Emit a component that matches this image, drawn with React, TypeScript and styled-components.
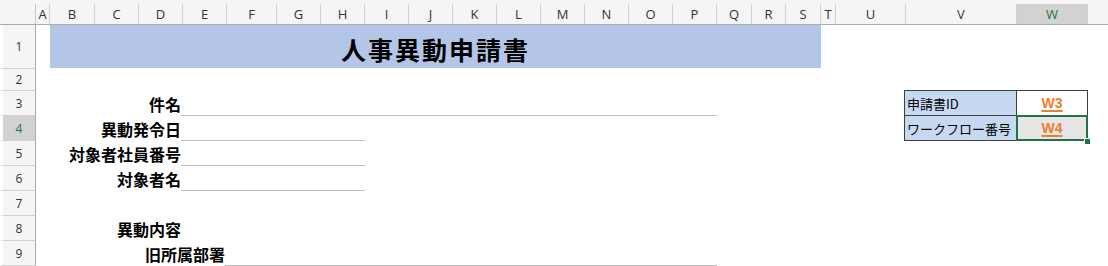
import React from "react";
import styled, { createGlobalStyle } from "styled-components";

const COLS = "ABCDEFGHIJKLMNOPQRSTUVW".split("");
const WIDTHS = [14, 45, 44, 44, 44, 50, 44, 44, 44, 44, 44, 44, 44, 44, 44, 44, 35, 34, 35, 15, 70, 111, 71];
const ROWS = [1, 2, 3, 4, 5, 6, 7, 8, 9];

// grid line helpers: column letter -> grid column, sheet row -> grid row
const col = (c: string) => COLS.indexOf(c) + 2;
const row = (r: number) => r + 1;

const GlobalStyle = createGlobalStyle`
  body {
    margin: 0;
    background: #fff;
    font-family: "Noto Sans CJK JP", "Noto Sans", sans-serif;
  }
`;

const Sheet = styled.div`
  display: grid;
  grid-template-columns: 36px ${WIDTHS.map((w) => `${w}px`).join(" ")} 1fr;
  grid-template-rows: 25px 44px 22px repeat(7, 25px) 1fr;
  width: 1108px;
  height: 266px;
  overflow: hidden;
`;

const HeaderBand = styled.div`
  grid-column: 1 / -1;
  grid-row: 1;
  background: #f5f5f5;
  border-bottom: 1px solid #ababab;
`;

const Corner = styled.div`
  grid-column: 1;
  grid-row: 1;
  margin-top: 4px;
  height: 20px;
  border-right: 1px solid #c6c6c6;
`;

const ColHead = styled.div<{ $col: number; $active?: boolean }>`
  grid-column: ${(p) => p.$col};
  grid-row: 1;
  margin-top: 4px;
  height: 20px;
  box-sizing: border-box;
  border-right: 1px solid #d0d0d0;
  background: ${(p) => (p.$active ? "#d2d2d2" : "transparent")};
  color: ${(p) => (p.$active ? "#217346" : "#333")};
  font-family: "Open Sans", "Noto Sans", sans-serif;
  font-size: 13px;
  display: flex;
  align-items: center;
  justify-content: center;
`;

const RowHead = styled.div<{ $row: number; $active?: boolean }>`
  grid-column: 1;
  grid-row: ${(p) => p.$row};
  box-sizing: border-box;
  border-left: 3px solid #fff;
  border-right: 1px solid #ababab;
  border-bottom: 1px solid #d4d4d4;
  background: ${(p) => (p.$active ? "#d2d2d2" : "#f5f5f5")};
  color: ${(p) => (p.$active ? "#217346" : "#333")};
  font-family: "Open Sans", "Noto Sans", sans-serif;
  font-size: 12px;
  display: flex;
  align-items: center;
  justify-content: center;
`;

const TitleCell = styled.div`
  grid-column: ${col("B")} / ${col("S") + 1};
  grid-row: ${row(1)};
  margin-bottom: 1px;
  background: #b4c6e7;
  display: flex;
  align-items: center;
  justify-content: center;
  padding-top: 5px;
  font-size: 25px;
  font-weight: 700;
  letter-spacing: 2px;
  color: #000;
`;

const Label = styled.div<{ $row: number; $from: string; $to: string }>`
  grid-column: ${(p) => col(p.$from)} / ${(p) => col(p.$to) + 1};
  grid-row: ${(p) => row(p.$row)};
  display: flex;
  align-items: flex-end;
  justify-content: flex-end;
  padding-right: 2px;
  padding-bottom: 2px;
  font-size: 16px;
  font-weight: 700;
  line-height: 20px;
  color: #000;
  white-space: nowrap;
`;

const Field = styled.div<{ $row: number; $from: string; $to: string }>`
  grid-column: ${(p) => col(p.$from)} / ${(p) => col(p.$to) + 1};
  grid-row: ${(p) => row(p.$row)};
  margin-left: -2px;
  border-bottom: 1px solid #bfbfbf;
`;

const InfoLabel = styled.div<{ $row: number }>`
  grid-column: ${col("V")};
  grid-row: ${(p) => row(p.$row)};
  margin-left: -2px;
  margin-top: ${(p) => (p.$row === 3 ? "-1px" : "0")};
  border-left: 1px solid #3f3f3f;
  border-right: 1px solid #3f3f3f;
  border-bottom: 1px solid #3f3f3f;
  border-top: ${(p) => (p.$row === 3 ? "1px solid #3f3f3f" : "none")};
  background: #c6d9f0;
  display: flex;
  align-items: flex-end;
  padding: 0 0 3px 2px;
  font-size: 13px;
  line-height: 17px;
  color: #000;
  white-space: nowrap;
`;

const InfoValue = styled.div<{ $row: number; $selected?: boolean }>`
  position: relative;
  grid-column: ${col("W")};
  grid-row: ${(p) => row(p.$row)};
  margin-top: ${(p) => (p.$row === 3 ? "-1px" : "0")};
  border-right: 1px solid #3f3f3f;
  border-bottom: 1px solid #3f3f3f;
  border-top: ${(p) => (p.$row === 3 ? "1px solid #3f3f3f" : "none")};
  background: ${(p) => (p.$selected ? "#e7e6e6" : "#fff")};
  display: flex;
  align-items: flex-end;
  justify-content: center;
  padding-bottom: 3px;
`;

const RefLink = styled.span`
  font-family: "Liberation Sans", Arial, sans-serif;
  font-size: 14px;
  font-weight: 700;
  line-height: 17px;
  color: #ed7d31;
  text-decoration: underline;
  text-decoration-thickness: 2px;
  text-underline-offset: 2px;
`;

const Selection = styled.div`
  position: absolute;
  left: -1px;
  top: -1px;
  right: -1px;
  bottom: -1px;
  border: 2px solid #217346;
  pointer-events: none;
`;

const FillHandle = styled.div`
  position: absolute;
  right: -4px;
  bottom: -5px;
  width: 5px;
  height: 5px;
  background: #217346;
  border: 1px solid #fff;
`;

const labels = [
  { r: 3, from: "B", to: "D", text: "件名" },
  { r: 4, from: "B", to: "D", text: "異動発令日" },
  { r: 5, from: "B", to: "D", text: "対象者社員番号" },
  { r: 6, from: "B", to: "D", text: "対象者名" },
  { r: 8, from: "B", to: "D", text: "異動内容" },
  { r: 9, from: "B", to: "E", text: "旧所属部署" },
];

const fields = [
  { r: 3, from: "E", to: "P" },
  { r: 4, from: "E", to: "H" },
  { r: 5, from: "E", to: "H" },
  { r: 6, from: "E", to: "H" },
  { r: 9, from: "F", to: "P" },
];

export default function App() {
  return (
    <>
      <GlobalStyle />
      <Sheet>
        <HeaderBand />
        <Corner />
        {COLS.map((c) => (
          <ColHead key={c} $col={col(c)} $active={c === "W"}>
            {c}
          </ColHead>
        ))}
        {ROWS.map((r) => (
          <RowHead key={r} $row={row(r)} $active={r === 4}>
            {r}
          </RowHead>
        ))}

        <TitleCell>人事異動申請書</TitleCell>

        {labels.map((l) => (
          <Label key={l.text} $row={l.r} $from={l.from} $to={l.to}>
            {l.text}
          </Label>
        ))}
        {fields.map((f) => (
          <Field key={f.r} $row={f.r} $from={f.from} $to={f.to} />
        ))}

        <InfoLabel $row={3}>申請書ID</InfoLabel>
        <InfoValue $row={3}>
          <RefLink>W3</RefLink>
        </InfoValue>
        <InfoLabel $row={4}>ワークフロー番号</InfoLabel>
        <InfoValue $row={4} $selected>
          <RefLink>W4</RefLink>
          <Selection />
          <FillHandle />
        </InfoValue>
      </Sheet>
    </>
  );
}
